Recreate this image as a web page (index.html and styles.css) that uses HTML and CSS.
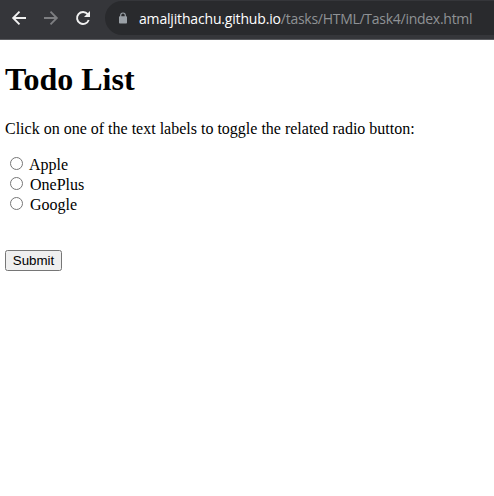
FILE: index.html
```html
<!DOCTYPE html>
<html lang="en">
<head>
<meta charset="utf-8">
<title>Todo List</title>
<link rel="stylesheet" href="styles.css">
</head>
<body>
<header class="toolbar">
  <svg class="nav" viewBox="0 0 16 16"><path d="M15 8H2.5M8.5 1.7L2.2 8l6.3 6.3"/></svg>
  <svg class="nav nav-off" viewBox="0 0 16 16"><path d="M1 8h12.5M7.500 1.700L13.800 8l-6.300 6.300"/></svg>
  <svg class="nav" viewBox="0 0 16 16"><path d="M12.700 4.200A6 6 0 1 0 13.700 10"/><path class="fill" d="M15 1v6H9z"/></svg>
  <div class="address">
    <svg class="lock" viewBox="0 0 10 12"><path d="M2.700 5V3.300a2.300 2.300 0 0 1 4.600 0V5"/><rect x="1" y="4.200" width="8" height="7.300" rx="0.8"/></svg>
    <span class="url"><span class="host">amaljithachu.github.io</span>/tasks/HTML/Task4/index.html</span>
  </div>
</header>
<main class="page">
  <h1>Todo List</h1>
  <p>Click on one of the text labels to toggle the related radio button:</p>
  <form>
    <div class="option"><input type="radio" id="apple" name="brand"><label for="apple">Apple</label></div>
    <div class="option"><input type="radio" id="oneplus" name="brand"><label for="oneplus">OnePlus</label></div>
    <div class="option"><input type="radio" id="google" name="brand"><label for="google">Google</label></div>
    <input class="submit" type="button" value="Submit">
  </form>
</main>
</body>
</html>
```

FILE: styles.css
```css
body { margin: 0; background: #fff; color: #000; font: 16px "Liberation Serif", serif; overflow: hidden; }
.toolbar { display: flex; align-items: center; height: 40px; box-sizing: border-box; padding: 0 0 3px 11px; gap: 16px; background: #35363a; border-bottom: 1px solid #5b5c60; }
.nav { width: 16px; height: 16px; flex: none; fill: none; stroke: #f1f1f1; stroke-width: 1.9; }
.nav-off { stroke: #7d7e81; }
.nav .fill { fill: #f1f1f1; stroke: none; }
.address { display: flex; align-items: center; flex: 1; height: 34px; margin-left: -2px; padding-left: 13px; gap: 11px; background: #292a2d; border-radius: 17px 0 0 17px; }
.lock { width: 10px; height: 12px; flex: none; fill: #9aa0a6; }
.lock path { fill: none; stroke: #9aa0a6; stroke-width: 1.2; }
.url { font: 14px "Open Sans", sans-serif; letter-spacing: -0.27px; color: #8f9295; white-space: nowrap; }
.host { color: #fff; letter-spacing: -0.17px; }
.page { padding: 21px 5px; }
h1 { margin: 0; font-size: 32px; line-height: 37px; }
p { margin: 22px 0 16px; line-height: 18px; }
.option { display: flex; height: 20px; line-height: 22px; }
.option input { width: 13px; height: 13px; margin: 3px 7px 0 5px; }
.option:first-child input { margin-right: 6px; }
.submit { display: block; margin: 36px 0 0; width: 57px; height: 21px; padding: 0; font: 13.333px "Liberation Sans", sans-serif; }
```
